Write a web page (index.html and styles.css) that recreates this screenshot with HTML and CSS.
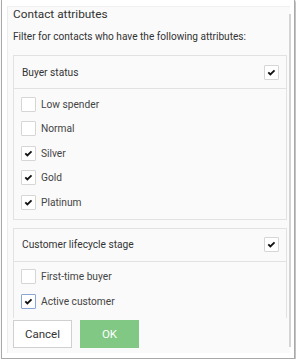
FILE: index.html
```html
<!DOCTYPE html>
<html lang="en">
<head>
  <meta charset="UTF-8">
  <title>Contact attributes</title>
  <link rel="stylesheet" href="styles.css">
</head>
<body>
  <div class="dialog">
    <div class="panel">
      <div class="scroll">
        <h2 class="title">Contact attributes</h2>
        <p class="hint">Filter for contacts who have the following attributes:</p>

        <div class="group">
          <div class="group-head">
            <span>Buyer status</span>
            <span class="box checked"><svg viewBox="0 0 15 15"><path d="M3.8 7.4 L6.2 9.8 L11 5"/></svg></span>
          </div>
          <ul class="options">
            <li><span class="box"></span>Low spender</li>
            <li><span class="box"></span>Normal</li>
            <li><span class="box checked"><svg viewBox="0 0 15 15"><path d="M3.8 7.4 L6.2 9.8 L11 5"/></svg></span>Silver</li>
            <li><span class="box checked"><svg viewBox="0 0 15 15"><path d="M3.8 7.4 L6.2 9.8 L11 5"/></svg></span>Gold</li>
            <li><span class="box checked"><svg viewBox="0 0 15 15"><path d="M3.8 7.4 L6.2 9.8 L11 5"/></svg></span>Platinum</li>
          </ul>
        </div>

        <div class="group">
          <div class="group-head">
            <span>Customer lifecycle stage</span>
            <span class="box checked"><svg viewBox="0 0 15 15"><path d="M3.8 7.4 L6.2 9.8 L11 5"/></svg></span>
          </div>
          <ul class="options options-long">
            <li><span class="box"></span>First-time buyer</li>
            <li><span class="box checked focus"><svg viewBox="0 0 15 15"><path d="M3.8 7.4 L6.2 9.8 L11 5"/></svg></span>Active customer</li>
          </ul>
        </div>
      </div>

      <div class="footer">
        <button class="btn">Cancel</button>
        <button class="btn btn-ok">OK</button>
      </div>
    </div>
  </div>
</body>
</html>
```

FILE: styles.css
```css
* {
  margin: 0;
  padding: 0;
  box-sizing: border-box;
}

body {
  font-family: Roboto, "Noto Sans", sans-serif;
  background-color: #fff;
  color: #333;
  padding: 0 1px;
}

.dialog {
  width: 294px;
  height: 359px;
  background-color: #fff;
  border: 1px solid #a9a9a9;
  border-top: none;
  box-shadow: 1px 1px 2px rgba(0, 0, 0, 0.35);
  padding: 6px 4px 5px 5px;
}

.panel {
  position: relative;
  height: 100%;
  background-color: #fafafa;
  border-left: 1px solid #ececec;
  border-top: 1px solid #f0f0f0;
  display: flex;
  flex-direction: column;
}

/* scrollbar thumb */
.panel::after {
  content: "";
  position: absolute;
  right: -1px;
  top: 7px;
  bottom: 6px;
  width: 2px;
  background-color: #d4d4d4;
}

.scroll {
  flex: 1;
  overflow: hidden;
  padding: 0 3px 0 5px;
}

.title {
  font-size: 11.8px;
  font-weight: normal;
  line-height: 14px;
  color: #333;
}

.hint {
  font-size: 10.1px;
  line-height: 13px;
  margin-top: 9px;
  color: #333;
}

.group {
  border: 1px solid #e2e2e2;
  margin-top: 12px;
}

.group + .group {
  margin-top: 8px;
}

.group-head {
  display: flex;
  justify-content: space-between;
  align-items: center;
  height: 33px;
  padding: 0 7px 0 8px;
  font-size: 10.2px;
  border-bottom: 1px solid #e2e2e2;
}

.options {
  list-style: none;
  padding: 3px 0 4px;
}

.options-long {
  padding-bottom: 30px;
}

.options li {
  display: flex;
  align-items: center;
  gap: 5px;
  height: 24.5px;
  padding-left: 7px;
  font-size: 10.2px;
  color: #444;
}

.box {
  width: 15px;
  height: 15px;
  flex: none;
  background-color: #fff;
  border: 1px solid #d6d6d6;
  border-radius: 1px;
  display: flex;
  align-items: center;
  justify-content: center;
}

.box svg {
  width: 13px;
  height: 13px;
  fill: none;
  stroke: #111;
  stroke-width: 2.1;
}

.box.focus {
  border-color: #8aa6d6;
}

.footer {
  display: flex;
  gap: 8px;
  padding: 2px 0 5px 5px;
}

.btn {
  width: 59px;
  height: 28px;
  font-family: Roboto, "Noto Sans", sans-serif;
  font-size: 11.5px;
  color: #333;
  background-color: #fff;
  border: 1px solid #d0d0d0;
}

.btn-ok {
  background-color: #80c883;
  border-color: #80c883;
  color: #fff;
}
```
